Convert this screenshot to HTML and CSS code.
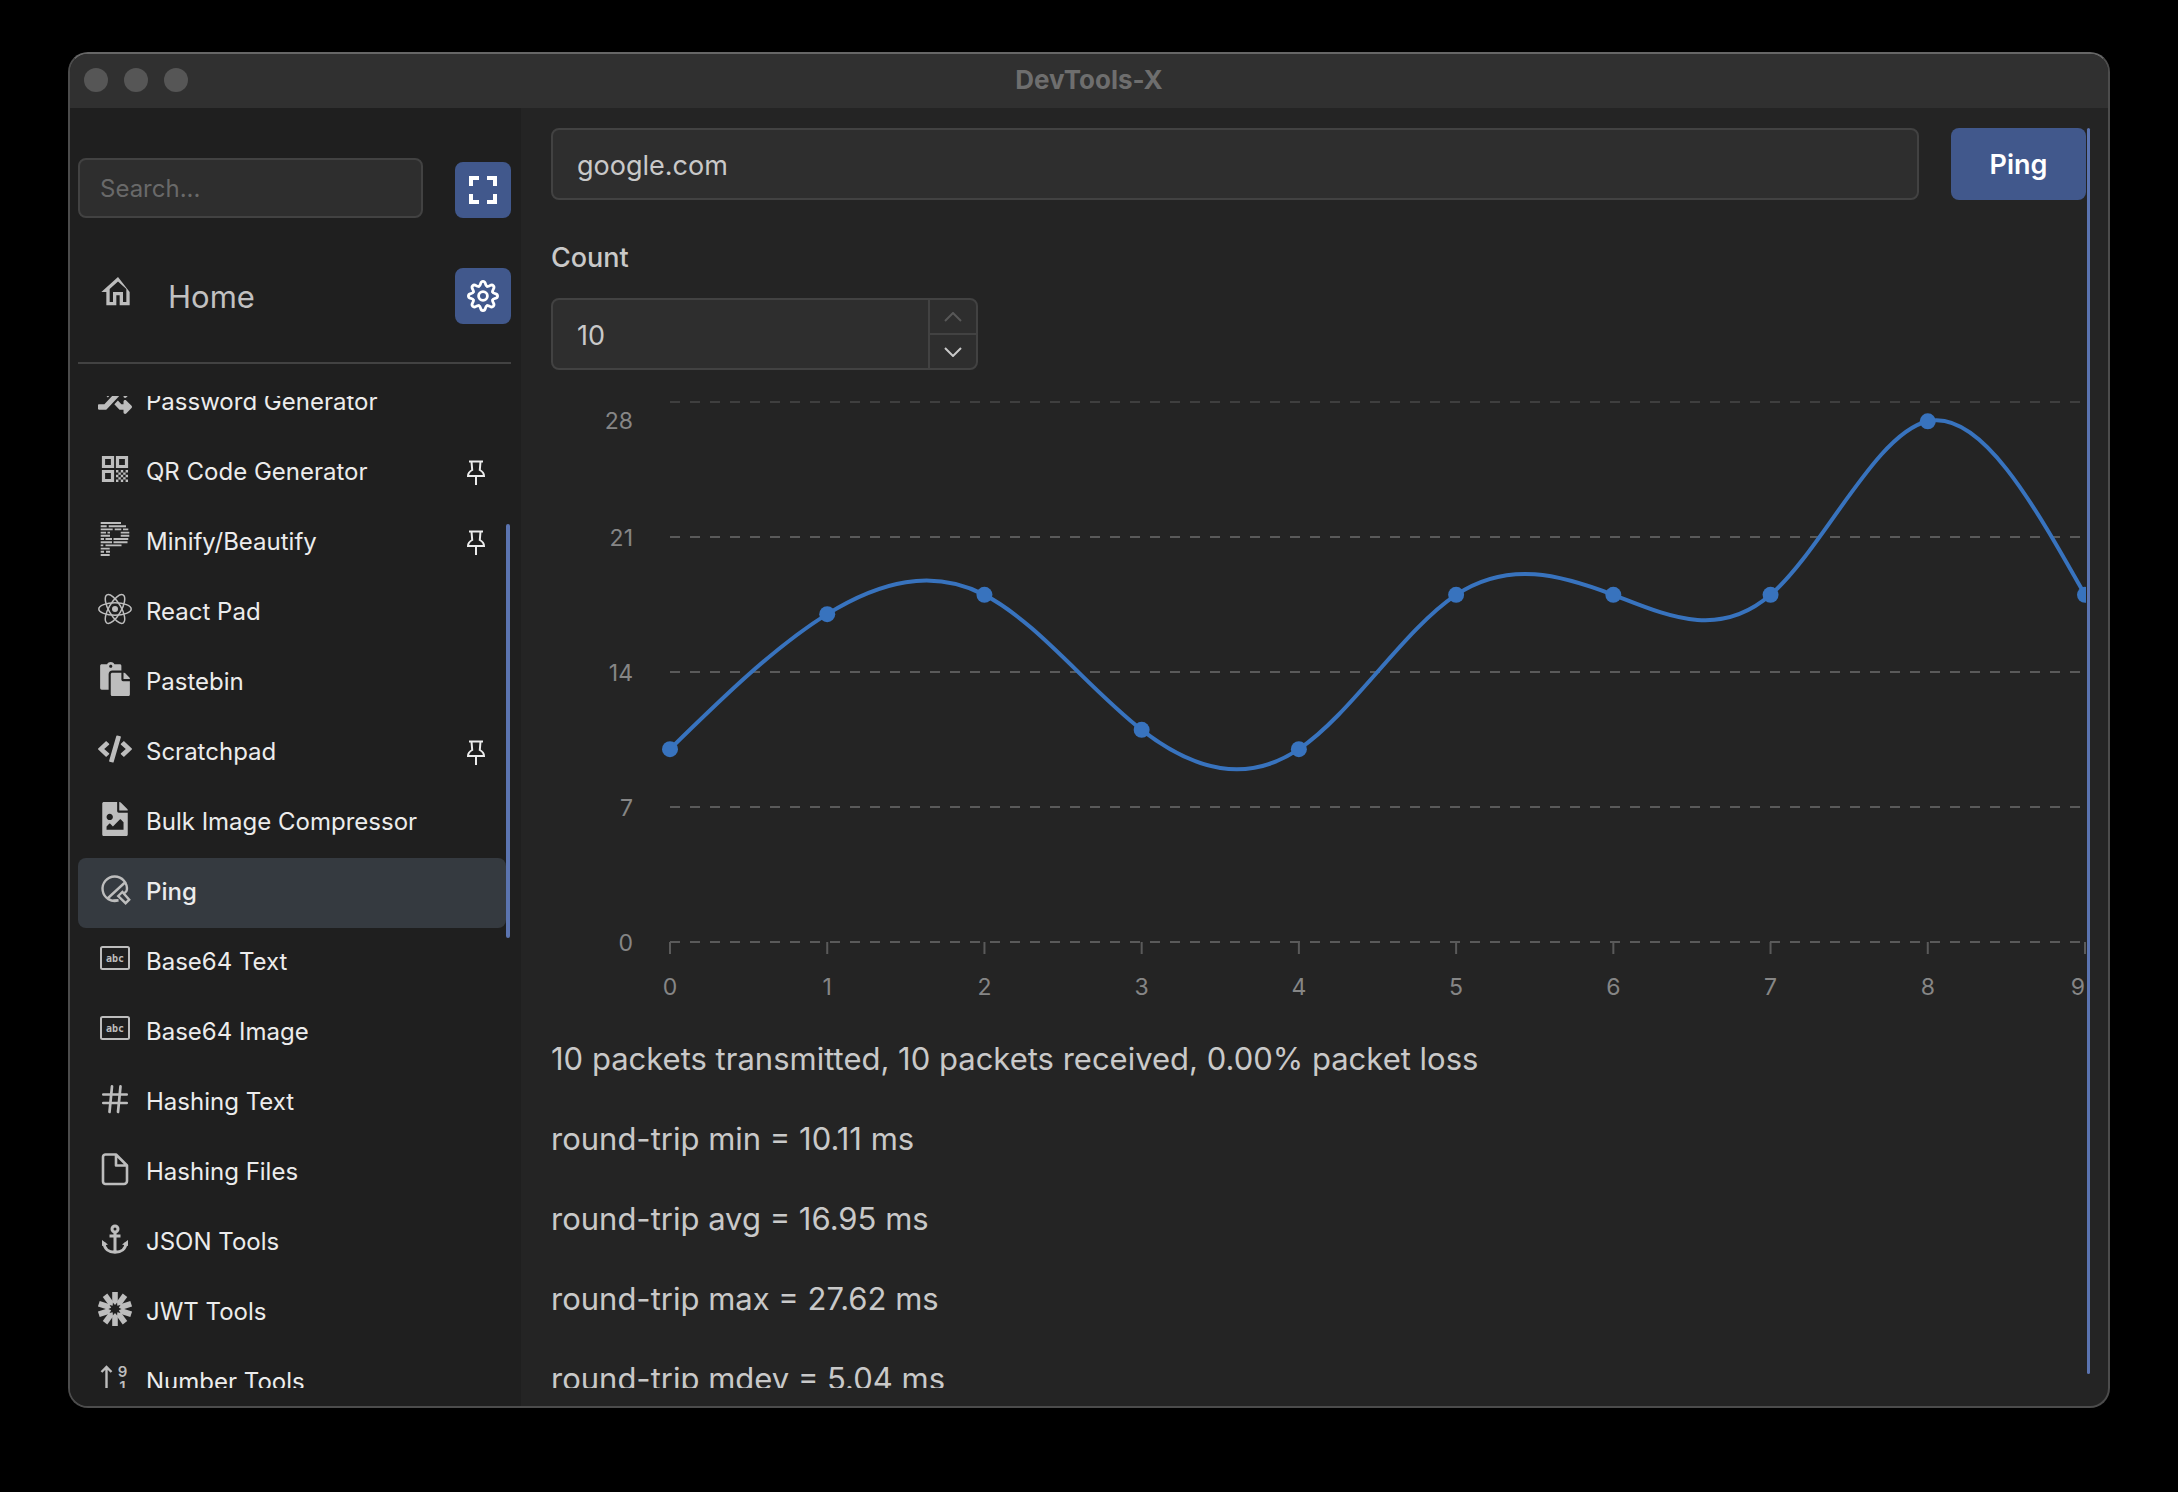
FILE: index.html
```html
<!DOCTYPE html>
<html lang="en">
<head>
<meta charset="utf-8">
<title>DevTools-X</title>
<link rel="stylesheet" href="styles.css">
</head>
<body>
<div class="window">
  <header class="titlebar">
    <div class="lights"><span></span><span></span><span></span></div>
    <h1>DevTools-X</h1>
  </header>
  <div class="layout">
    <aside class="sidebar">
      <div class="search-row">
        <input class="box search" type="text" placeholder="Search..." aria-label="Search">
        <button class="square" aria-label="Fullscreen">
          <svg width="48" height="48" viewBox="0 0 24 24" fill="currentColor"><path d="M7 14H5v5h5v-2H7v-3zm-2-4h2V7h3V5H5v5zm12 7h-3v2h5v-5h-2v3zM14 5v2h3v3h2V5h-5z"/></svg>
        </button>
      </div>
      <div class="home-row">
        <a class="home" href="#home">
          <svg class="icon" width="40" height="40" viewBox="0 0 24 24" fill="currentColor"><path d="M12 5.69l5 4.5V18h-2v-6H9v6H7v-7.81l5-4.5M12 3L2 12h3v8h6v-6h2v6h6v-8L12 3z"/></svg>
          <span>Home</span>
        </a>
        <button class="square" aria-label="Settings">
          <svg width="34" height="34" viewBox="-17 -17 34 34" fill="none" stroke="currentColor" stroke-width="2.8" stroke-linecap="round">
            <defs><path id="tooth" d="M-4 -9.7C-1.6 -10.7 -3.4 -14.6 0 -14.6S1.6 -10.7 4 -9.7"/></defs>
            <use href="#tooth"/><use href="#tooth" transform="rotate(45)"/><use href="#tooth" transform="rotate(90)"/><use href="#tooth" transform="rotate(135)"/><use href="#tooth" transform="rotate(180)"/><use href="#tooth" transform="rotate(225)"/><use href="#tooth" transform="rotate(270)"/><use href="#tooth" transform="rotate(315)"/>
            <circle r="4.4"/>
          </svg>
        </button>
      </div>
      <nav class="tools">
        <ul>
          <li><a href="#password"><svg class="icon" width="34" height="34" viewBox="0 0 512 512" fill="currentColor"><path d="M504.971 359.029c9.373 9.373 9.373 24.569 0 33.941l-80 79.984c-15.01 15.01-40.971 4.49-40.971-16.971V416h-58.785a12.004 12.004 0 0 1-8.773-3.812l-70.556-75.596 53.333-57.143L352 336h32v-39.981c0-21.438 25.943-31.998 40.971-16.971l80 79.981zM12 176h84l52.781 56.551 53.333-57.143-70.556-75.596A11.999 11.999 0 0 0 122.785 96H12c-6.627 0-12 5.373-12 12v56c0 6.627 5.373 12 12 12zm372 0v39.984c0 21.46 25.961 31.98 40.971 16.971l80-79.984c9.373-9.373 9.373-24.569 0-33.941l-80-79.981C409.943 24.021 384 34.582 384 56.019V96h-58.785a12.004 12.004 0 0 0-8.773 3.812L96 336H12c-6.627 0-12 5.373-12 12v56c0 6.627 5.373 12 12 12h110.785c3.326 0 6.503-1.381 8.773-3.812L352 176h32z"/></svg><span>Password Generator</span></a></li>
          <li><a href="#qr"><svg class="icon" width="34" height="34" viewBox="0 0 34 34" fill="none" stroke="currentColor" stroke-width="3.2"><path d="M5.500 5.500h9v9h-9zM19.500 5.500h9v9h-9zM5.500 19.500h9v9h-9z"/><path stroke="none" fill="currentColor" d="M18 18h2.400v2.400H18zM22.800 18h2.400v2.400h-2.400zM27.600 18H30v2.400h-2.400zM20.400 20.400h2.400v2.400h-2.400zM25.200 20.400h2.400v2.400h-2.400zM18 22.800h2.400v2.400H18zM22.800 22.800h2.400v2.400h-2.400zM27.600 22.800H30v2.400h-2.400zM20.400 25.200h2.400v2.400h-2.400zM25.200 25.200h2.400v2.400h-2.400zM18 27.600h2.400V30H18zM22.800 27.600h2.400V30h-2.400zM27.600 27.600H30V30h-2.400z"/></svg><span>QR Code Generator</span><svg class="pin" width="20" height="26" viewBox="0 0 20 26"><use href="#pin"/></svg></a></li>
          <li><a href="#minify"><svg class="icon" width="34" height="34" viewBox="0 0 34 34" fill="none" stroke="currentColor" stroke-width="1.900"><path d="M2.700 1H23M2.700 4.200h6M10.700 4.200H28M2.700 7.400h12M16.700 7.400h6.600M25 7.400h5.300M2.700 10.600H8M9.500 10.600H12M22.700 10.600h8.600M2.700 13.800H12M22.700 13.800h8.600M2.700 17H6M7.500 17H14M15.500 17h14.800M2.700 20.200H14M15.500 20.200h14M2.700 23.400h2.600M7.500 23.400h16M2.700 26.600h9M2.700 29.800H6M8 29.800h4M2.700 33h9"/></svg><span>Minify/Beautify</span><svg class="pin" width="20" height="26" viewBox="0 0 20 26"><use href="#pin"/></svg></a></li>
          <li><a href="#react"><svg class="icon" width="34" height="34" viewBox="-17 -17 34 34" fill="none" stroke="currentColor" stroke-width="1.500"><ellipse rx="16.200" ry="6.200"/><ellipse rx="16.200" ry="6.200" transform="rotate(60)"/><ellipse rx="16.200" ry="6.200" transform="rotate(120)"/><circle r="3" fill="currentColor" stroke="none"/></svg><span>React Pad</span></a></li>
          <li><a href="#pastebin"><svg class="icon" width="34" height="34" viewBox="0 0 448 512" fill="currentColor"><path d="M128 184c0-30.879 25.122-56 56-56h136V56c0-13.255-10.745-24-24-24h-80.610C204.306 12.890 183.637 0 160 0s-44.306 12.890-55.390 32H24C10.745 32 0 42.745 0 56v336c0 13.255 10.745 24 24 24h104V184zm32-144c13.255 0 24 10.745 24 24s-10.745 24-24 24-24-10.745-24-24 10.745-24 24-24zm184 248h104v200c0 13.255-10.745 24-24 24H184c-13.255 0-24-10.745-24-24V184c0-13.255 10.745-24 24-24h136v104c0 13.200 10.800 24 24 24zm104-38.059V256h-96v-96h6.059a24 24 0 0 1 16.970 7.029l65.941 65.941a24.002 24.002 0 0 1 7.030 16.971z"/></svg><span>Pastebin</span></a></li>
          <li><a href="#scratchpad"><svg class="icon" width="34" height="34" viewBox="0 0 640 512" fill="currentColor"><path d="M278.900 511.500l-61-17.700c-6.400-1.800-10-8.500-8.200-14.900L346.200 8.700c1.800-6.400 8.500-10 14.900-8.200l61 17.700c6.400 1.800 10 8.500 8.200 14.900L293.800 503.300c-1.900 6.400-8.500 10.100-14.900 8.200zm-114-112.200l43.500-46.400c4.600-4.900 4.300-12.700-.8-17.200L117 256l90.600-79.700c5.100-4.500 5.500-12.300.8-17.200l-43.500-46.400c-4.500-4.800-12.100-5.100-17-.5L3.800 247.200c-5.100 4.700-5.100 12.800 0 17.500l144.100 135.100c4.900 4.600 12.500 4.400 17-.5zm327.200.6l144.100-135.100c5.100-4.700 5.100-12.800 0-17.500L492.100 112.100c-4.800-4.500-12.400-4.300-17 .5L431.600 159c-4.600 4.900-4.300 12.700.8 17.200L523 256l-90.600 79.700c-5.100 4.500-5.500 12.300-.8 17.200l43.500 46.400c4.500 4.900 12.100 5.100 17 .6z"/></svg><span>Scratchpad</span><svg class="pin" width="20" height="26" viewBox="0 0 20 26"><use href="#pin"/></svg></a></li>
          <li><a href="#compressor"><svg class="icon" width="34" height="34" viewBox="0 0 384 512" fill="currentColor"><path d="M384 121.941V128H256V0h6.059a24 24 0 0 1 16.970 7.029l97.941 97.941a24.002 24.002 0 0 1 7.030 16.971zM248 160c-13.200 0-24-10.800-24-24V0H24C10.745 0 0 10.745 0 24v464c0 13.255 10.745 24 24 24h336c13.255 0 24-10.745 24-24V160H248zm-135.455 16c26.510 0 48 21.490 48 48s-21.490 48-48 48-48-21.490-48-48 21.491-48 48-48zm208 240h-256l.485-48.485L104.545 328c4.686-4.686 11.799-4.201 16.485.485L160.545 368 264.060 264.485c4.686-4.686 12.284-4.686 16.971 0L320.545 304v112z"/></svg><span>Bulk Image Compressor</span></a></li>
          <li><a href="#ping" class="active" aria-current="page"><svg class="icon" width="34" height="34" viewBox="0 0 34 34" fill="none" stroke="currentColor" stroke-width="2.400"><path d="M20.500 28.300A12.200 12.200 0 1 1 28.800 18.500M9 27L28 9.500M20.500 28.300L15.500 28.500M28.800 18.500C28 20 27 21 25.500 21.500"/><path d="M20.200 24l4.200-4 6.800 7.600-3.600 3.600z"/></svg><span>Ping</span></a></li>
          <li><a href="#base64-text"><svg class="icon" width="34" height="34" viewBox="0 0 34 34"><use href="#abc"/><text x="17" y="20">abc</text></svg><span>Base64 Text</span></a></li>
          <li><a href="#base64-image"><svg class="icon" width="34" height="34" viewBox="0 0 34 34"><use href="#abc"/><text x="17" y="20">abc</text></svg><span>Base64 Image</span></a></li>
          <li><a href="#hash-text"><svg class="icon" width="34" height="34" viewBox="0 0 34 34" fill="none" stroke="currentColor" stroke-width="2.700" stroke-linecap="round"><path d="M5.300 12.500h23.400M5.300 21h23.400M14 4.300L11.500 30M22.500 4.300L20 30"/></svg><span>Hashing Text</span></a></li>
          <li><a href="#hash-files"><svg class="icon" width="34" height="34" viewBox="0 0 34 34" fill="none" stroke="currentColor" stroke-width="2.600" stroke-linejoin="round"><path d="M7.500 2.500h10.500l11 11v15.500a3 3 0 0 1-3 3h-18.500a2.500 2.500 0 0 1-2.500-2.500v-24.500a2.500 2.500 0 0 1 2.500-2.500zM18 2.500v11h11"/></svg><span>Hashing Files</span></a></li>
          <li><a href="#json"><svg class="icon" width="34" height="34" viewBox="0 0 34 34" fill="none" stroke="currentColor" stroke-width="3"><circle cx="17" cy="7" r="3"/><path d="M17 10v20M11.500 14h11M6 20.500C6 27 11 30.200 17 30.200S28 27 28 20.500"/><path d="M4 24v-6l6 4.500zM30 24v-6l-6 4.500z" fill="currentColor" stroke="none"/></svg><span>JSON Tools</span></a></li>
          <li><a href="#jwt"><svg class="icon" width="34" height="34" viewBox="-17 -17 34 34" fill="currentColor"><defs><path id="ray" d="M-2.800 -17h5.600v9.800l-2.800 3.200-2.800-3.200z"/></defs><use href="#ray"/><use href="#ray" transform="rotate(36)"/><use href="#ray" transform="rotate(72)"/><use href="#ray" transform="rotate(108)"/><use href="#ray" transform="rotate(144)"/><use href="#ray" transform="rotate(180)"/><use href="#ray" transform="rotate(216)"/><use href="#ray" transform="rotate(252)"/><use href="#ray" transform="rotate(288)"/><use href="#ray" transform="rotate(324)"/></svg><span>JWT Tools</span></a></li>
          <li><a href="#number"><svg class="icon digits" width="34" height="34" viewBox="0 0 34 34"><path d="M8.500 31V5M3.500 10l5-5 5 5" fill="none" stroke="currentColor" stroke-width="2.400"/><text x="24.500" y="15">9</text><text x="24.500" y="30">1</text></svg><span>Number Tools</span></a></li>
        </ul>
        <div class="thumb"></div>
      </nav>
    </aside>
    <main class="content">
      <form class="host-row" onsubmit="return false">
        <input class="box" type="text" value="google.com" aria-label="Host">
        <button class="primary">Ping</button>
      </form>
      <div class="field">
        <label for="count">Count</label>
        <div class="stepper">
          <input class="box" id="count" type="text" inputmode="numeric" value="10">
          <div class="steps">
            <button aria-label="Increase" disabled><svg width="18" height="10" viewBox="0 0 18 10"><path d="M1 9l8-8 8 8"/></svg></button>
            <button aria-label="Decrease"><svg width="18" height="10" viewBox="0 0 18 10"><path d="M1 1l8 8 8-8"/></svg></button>
          </div>
        </div>
      </div>
      <svg class="chart" id="chart" role="img" aria-label="Ping times in milliseconds"></svg>
      <div class="stats">
        <p>10 packets transmitted, 10 packets received, 0.00% packet loss</p>
        <p>round-trip min = 10.11 ms</p>
        <p>round-trip avg = 16.95 ms</p>
        <p>round-trip max = 27.62 ms</p>
        <p>round-trip mdev = 5.04 ms</p>
      </div>
    </main>
    <div class="main-thumb"></div>
  </div>
</div>
<svg class="symbols" width="0" height="0" aria-hidden="true">
  <defs>
    <path id="pin" fill="none" stroke="currentColor" stroke-width="2" d="M3 1.500h14M5.500 1.500l0.700 8.500C3.500 11.500 2 13.500 2 16h16c0-2.500-1.500-4.500-4.200-6l0.700-8.500M10 16v9"/>
    <rect id="abc" x="3" y="5" width="28" height="22" rx="1.500" fill="none" stroke="currentColor" stroke-width="2"/>
  </defs>
</svg>
<script src="app.js"></script>
</body>
</html>
```
FILE: styles.css
```css
* { box-sizing: border-box; }
body {
  margin: 0;
  height: 100vh;
  padding: 52px 68px 84px;
  background: #000;
  color: #c9c9c9;
  font-family: Inter, "Liberation Sans", sans-serif;
  font-size: 27px;
}
button, input { font: inherit; color: inherit; }
button { border: 0; padding: 0; display: flex; align-items: center; justify-content: center; }
a { color: inherit; text-decoration: none; }
.symbols { position: absolute; }

.window {
  height: 100%;
  display: flex;
  flex-direction: column;
  border: 2px solid #4c4c4c;
  border-top-color: #666;
  border-radius: 20px;
  overflow: hidden;
  background: #242424;
}
.titlebar {
  flex: none;
  height: 54px;
  display: grid;
  grid-template-columns: 1fr auto 1fr;
  align-items: center;
  padding: 0 14px 2px;
  background: #303030;
}
.titlebar h1 { margin: 0; font-size: 26px; line-height: 50px; font-weight: 700; color: #6e6e6e; }
.lights { display: flex; gap: 16px; }
.lights span { width: 24px; height: 24px; border-radius: 50%; background: #565656; }

.layout { flex: 1; min-height: 0; display: flex; position: relative; }
.box {
  height: 72px;
  min-width: 0;
  padding: 2px 24px 0;
  border: 2px solid #424242;
  border-radius: 8px;
  background: #2e2e2e;
  outline: none;
}

.sidebar {
  flex: none;
  width: 451px;
  display: flex;
  flex-direction: column;
  padding: 50px 10px 18px 8px;
  background: #1f1f1f;
}
.search-row { display: flex; align-items: flex-end; gap: 32px; }
.search { flex: 1; height: 60px; padding: 0 20px; font-size: 24px; }
.search::placeholder { color: #696969; opacity: 1; }
.square { flex: none; width: 56px; height: 56px; border-radius: 8px; background: #41588c; color: #fff; }
.home-row {
  display: flex;
  align-items: center;
  justify-content: space-between;
  margin-top: 50px;
  padding-bottom: 38px;
  border-bottom: 2px solid #424242;
}
.home { display: flex; align-items: center; gap: 30px; padding-left: 20px; font-size: 31px; color: #c1c1c1; }
.icon { flex: none; box-sizing: content-box; padding-bottom: 8px; color: #bdbdbd; }
.tools { flex: 1; min-height: 0; margin-top: 32px; overflow: hidden; position: relative; }
.tools ul { list-style: none; margin: -28px 5px 0 0; padding: 0; }
.tools a {
  height: 70px;
  display: flex;
  align-items: center;
  gap: 14px;
  padding: 0 20px;
  border-radius: 8px;
  font-size: 24px;
  line-height: 30px;
  color: #ececec;
}
.tools a span { padding-bottom: 2px; }
.tools a.active { background: #353a40; font-weight: 500; }
.pin { margin-left: auto; }
.icon text {
  fill: currentColor;
  font: 700 10px "DejaVu Sans Mono", monospace;
  text-anchor: middle;
}
.digits text { font: 600 15px Inter, sans-serif; }
.thumb {
  position: absolute;
  top: 128px;
  right: 1px;
  width: 4px;
  height: 414px;
  border-radius: 2px;
  background: #5b74b0;
}

.content {
  flex: 1;
  min-width: 0;
  margin: 20px 22px 18px 30px;
  overflow: hidden;
}
.host-row { display: flex; gap: 32px; }
.host-row .box { flex: 1; }
.primary { flex: none; width: 135px; height: 72px; border-radius: 8px; background: #41588c; color: #fff; font-weight: 600; }
.field { margin-top: 36px; }
.field label { display: block; line-height: 44px; font-weight: 500; }
.stepper { position: relative; width: 427px; margin-top: 18px; }
.stepper .box { display: block; width: 100%; padding-right: 72px; }
.steps {
  position: absolute;
  top: 2px;
  right: 2px;
  bottom: 2px;
  width: 48px;
  display: flex;
  flex-direction: column;
  border-left: 2px solid #424242;
}
.steps button { flex: 1; background: none; }
.steps button + button { border-top: 2px solid #424242; }
.steps button:disabled { color: #585858; }
.steps path { fill: none; stroke: currentColor; stroke-width: 2; }

.chart { display: block; width: 100%; height: 620px; margin-top: 20px; }
.chart text { fill: #868686; font-size: 23px; }
.grid { stroke: #5a5a5a; stroke-width: 2; stroke-dasharray: 10 10; }
.grid.top { stroke-width: 1; }
.tick { stroke: #5a5a5a; stroke-width: 2; }
.series { fill: none; stroke: #3873be; stroke-width: 4; }
.dot { fill: #3873be; }
.stats { margin-top: 24px; font-size: 31px; line-height: 50px; }
.stats p { margin: 0 0 30px; }
.main-thumb {
  position: absolute;
  top: 20px;
  right: 18px;
  bottom: 32px;
  width: 3px;
  border-radius: 2px;
  background: #5b74b0;
}
```
FILE: app.js
```js
const values = [10, 17, 18, 11, 10, 18, 18, 18, 27, 18];
const gridValues = [0, 7, 14, 21, 28];
const chart = document.getElementById('chart');
const plot = { left: 119, top: 12, bottom: 552 };

// Control points of a natural cubic spline through one coordinate list.
function controls(x) {
  const n = x.length - 1;
  const a = [], b = [], r = [];
  a[0] = 0; b[0] = 2; r[0] = x[0] + 2 * x[1];
  for (let i = 1; i < n - 1; i++) { a[i] = 1; b[i] = 4; r[i] = 4 * x[i] + 2 * x[i + 1]; }
  a[n - 1] = 2; b[n - 1] = 7; r[n - 1] = 8 * x[n - 1] + x[n];
  for (let i = 1; i < n; i++) {
    const m = a[i] / b[i - 1];
    b[i] -= m;
    r[i] -= m * r[i - 1];
  }
  a[n - 1] = r[n - 1] / b[n - 1];
  for (let i = n - 2; i >= 0; i--) a[i] = (r[i] - a[i + 1]) / b[i];
  b[n - 1] = (x[n] + a[n - 1]) / 2;
  for (let i = 0; i < n - 1; i++) b[i] = 2 * x[i + 1] - a[i + 1];
  return [a, b];
}

function draw() {
  const right = chart.clientWidth - 1;
  const px = i => plot.left + (right - plot.left) * i / (values.length - 1);
  const py = v => plot.bottom - (plot.bottom - plot.top) * v / 28;
  let out = '';
  for (const v of gridValues) {
    const y = Math.round(py(v));
    const top = v === 28;
    out += `<line class="grid${top ? ' top' : ''}" x1="${plot.left}" x2="${right}" y1="${y}" y2="${y}"/>`;
    out += `<text x="82" y="${y + (top ? 27 : 9)}" text-anchor="end">${v}</text>`;
  }
  const xs = values.map((v, i) => px(i));
  const ys = values.map(py);
  xs.forEach((x, i) => {
    const last = i === xs.length - 1;
    out += `<line class="tick" x1="${x}" x2="${x}" y1="${plot.bottom}" y2="${plot.bottom + 12}"/>`;
    out += `<text x="${x}" y="${plot.bottom + 53}" text-anchor="${last ? 'end' : 'middle'}">${i}</text>`;
  });
  const [ax, bx] = controls(xs);
  const [ay, by] = controls(ys);
  let d = `M${xs[0]} ${ys[0]}`;
  for (let i = 0; i < xs.length - 1; i++) {
    d += `C${ax[i]} ${ay[i]} ${bx[i]} ${by[i]} ${xs[i + 1]} ${ys[i + 1]}`;
  }
  out += `<path class="series" d="${d}"/>`;
  xs.forEach((x, i) => { out += `<circle class="dot" cx="${x}" cy="${ys[i]}" r="8"/>`; });
  chart.innerHTML = out;
}

draw();
window.addEventListener('resize', draw);
```
